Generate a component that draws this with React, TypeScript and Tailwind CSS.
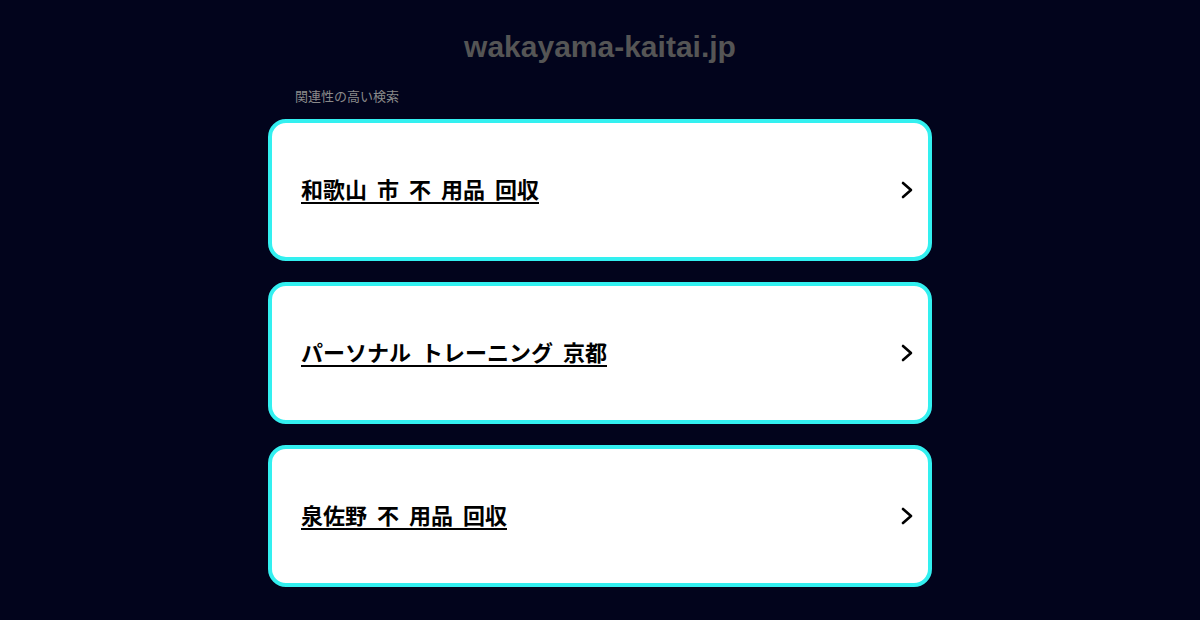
import React from "react";

const items = ["和歌山 市 不 用品 回収", "パーソナル トレーニング 京都", "泉佐野 不 用品 回収"];

export default function App() {
  return (
    <div className="min-h-[620px] w-full bg-[#02041c] flex flex-col items-center" style={{ fontFamily: '"Liberation Sans", "Noto Sans CJK JP", sans-serif' }}>
      <h1 className="mt-[29px] text-[30px] leading-[36px] font-bold text-[#555555]">wakayama-kaitai.jp</h1>
      <div className="w-[664px] mt-[22px]">
        <div className="pl-[27px] text-[13px] leading-[18px] text-[#8a8a8a]" style={{ fontFamily: '"Noto Sans CJK JP", sans-serif' }}>関連性の高い検索</div>
        <div className="mt-[14px] flex flex-col gap-[21px]">
          {items.map((t) => (
            <a key={t} href="#" className="h-[142px] rounded-[18px] border-4 border-[#33f0f0] bg-white flex items-center justify-between pl-[29px] pr-[15px]">
              <span className="mb-[4px] text-[22px] font-bold text-black underline underline-offset-[4px] decoration-[2px] [word-spacing:5px]" style={{ fontFamily: '"Noto Sans CJK JP", sans-serif' }}>{t}</span>
              <svg width="12" height="18" viewBox="0 0 12 18" fill="none" stroke="black" strokeWidth="2.6" strokeLinecap="round" strokeLinejoin="round">
                <path d="M2 2 L10 9 L2 16" />
              </svg>
            </a>
          ))}
        </div>
      </div>
    </div>
  );
}
